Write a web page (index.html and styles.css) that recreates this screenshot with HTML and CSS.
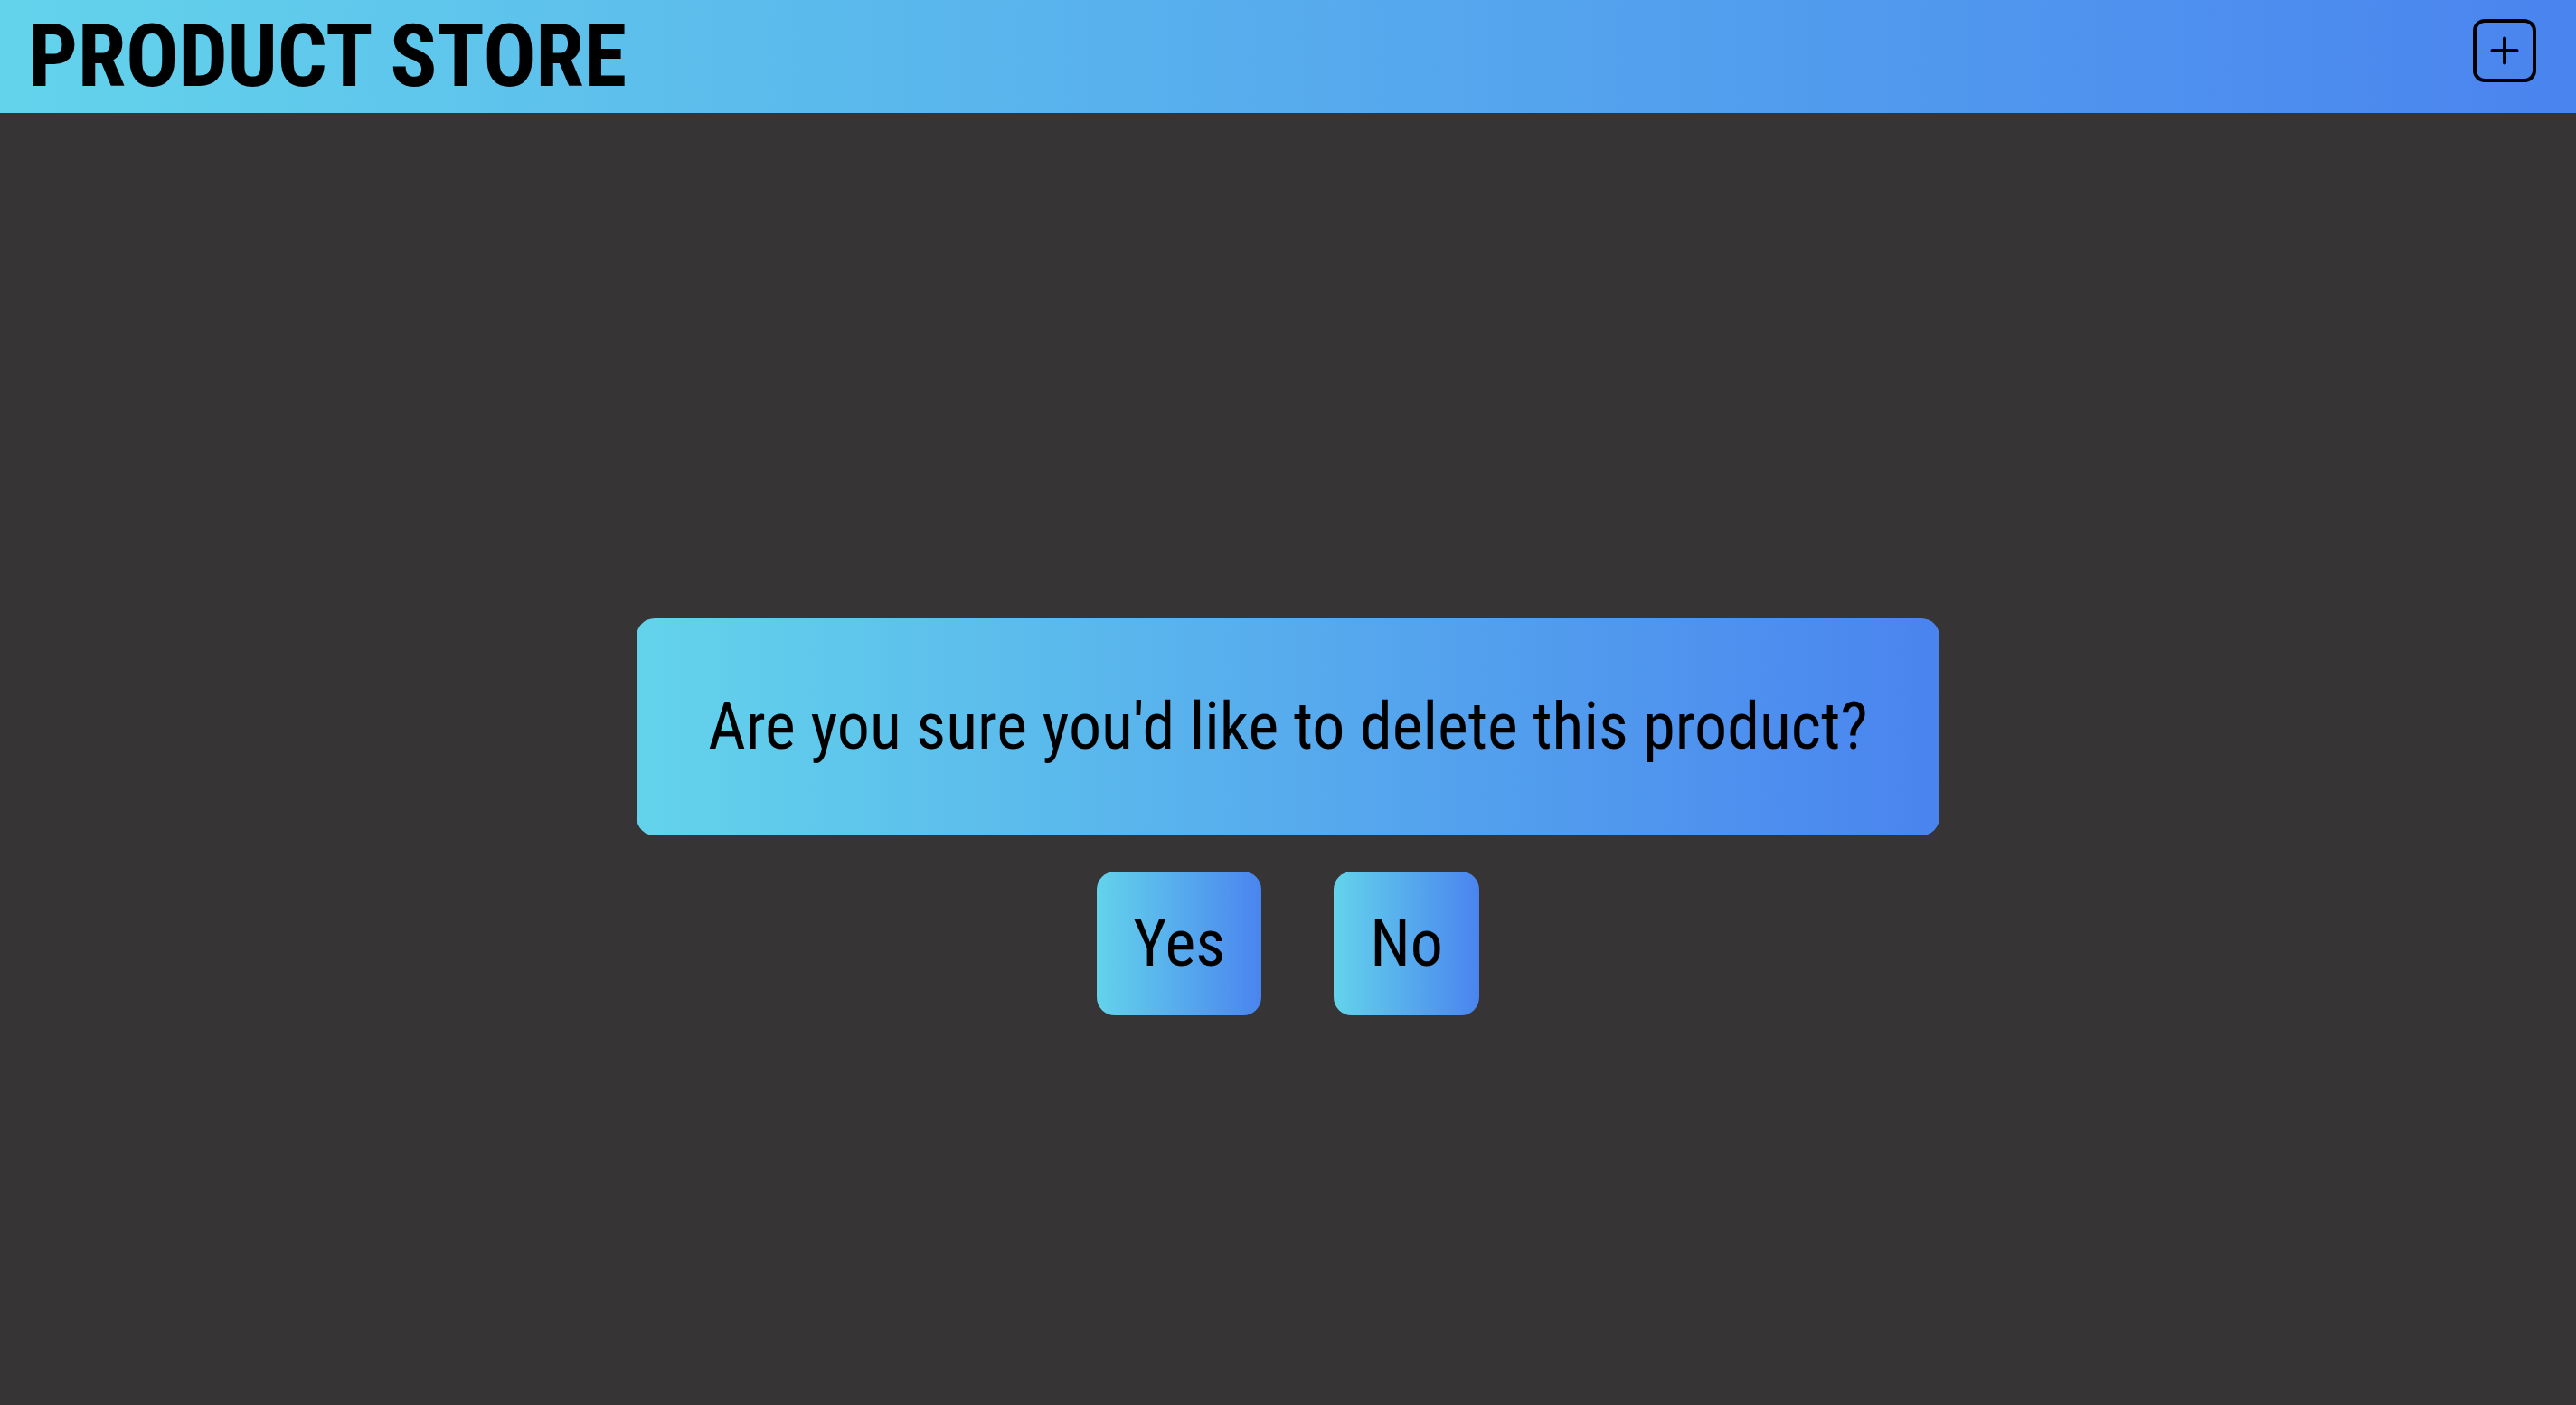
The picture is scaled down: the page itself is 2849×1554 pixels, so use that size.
FILE: index.html
```html
<!DOCTYPE html>
<html lang="en">
<head>
<meta charset="utf-8">
<title>Product Store</title>
<link rel="stylesheet" href="styles.css">
</head>
<body>
  <header class="topbar">
    <h1 class="brand">PRODUCT STORE</h1>
    <button class="add-btn" aria-label="Add product">
      <svg width="70" height="70" viewBox="0 0 70 70" fill="none" stroke="#000" stroke-width="4" stroke-linecap="round">
        <rect x="2" y="2" width="66" height="66" rx="11"/>
        <path d="M35 21.5v27M21.5 35h27"/>
      </svg>
    </button>
  </header>
  <main class="content">
    <div class="confirm">
      <p class="confirm-text">Are you sure you'd like to delete this product?</p>
    </div>
    <div class="actions">
      <button class="choice">Yes</button>
      <button class="choice">No</button>
    </div>
  </main>
</body>
</html>
```

FILE: styles.css
```css
* { box-sizing: border-box; }
html, body {
  margin: 0;
  height: 100%;
}
body {
  background: #363435;
  font-family: "Roboto Condensed", Roboto, "Liberation Sans", sans-serif;
  color: #000;
}
.topbar {
  height: 125px;
  display: flex;
  align-items: center;
  justify-content: space-between;
  padding: 0 44px 0 31px;
  background: linear-gradient(to right, #63d3eb, #4a84ef);
}
.brand {
  margin: 0;
  font-size: 97px;
  font-weight: 700;
  line-height: 1;
  letter-spacing: -0.4px;
  margin-top: 0;
}
.add-btn {
  background: none;
  border: 0;
  padding: 0;
  display: flex;
  margin-top: -14px;
  cursor: pointer;
}
.content {
  display: flex;
  flex-direction: column;
  align-items: center;
  padding-top: 559px;
}
.confirm {
  width: 1441px;
  height: 240px;
  border-radius: 20px;
  background: linear-gradient(to right, #63d3eb, #4a84ef);
  display: flex;
  align-items: center;
  justify-content: center;
}
.confirm-text {
  margin: 0;
  font-size: 72px;
  line-height: 1;
}
.actions {
  display: flex;
  gap: 80px;
  margin-top: 40px;
}
.choice {
  height: 159px;
  padding: 0 40px;
  border: 0;
  border-radius: 20px;
  background: linear-gradient(to right, #63d3eb, #4a84ef);
  font-family: inherit;
  font-size: 72px;
  color: #000;
  cursor: pointer;
}
```
